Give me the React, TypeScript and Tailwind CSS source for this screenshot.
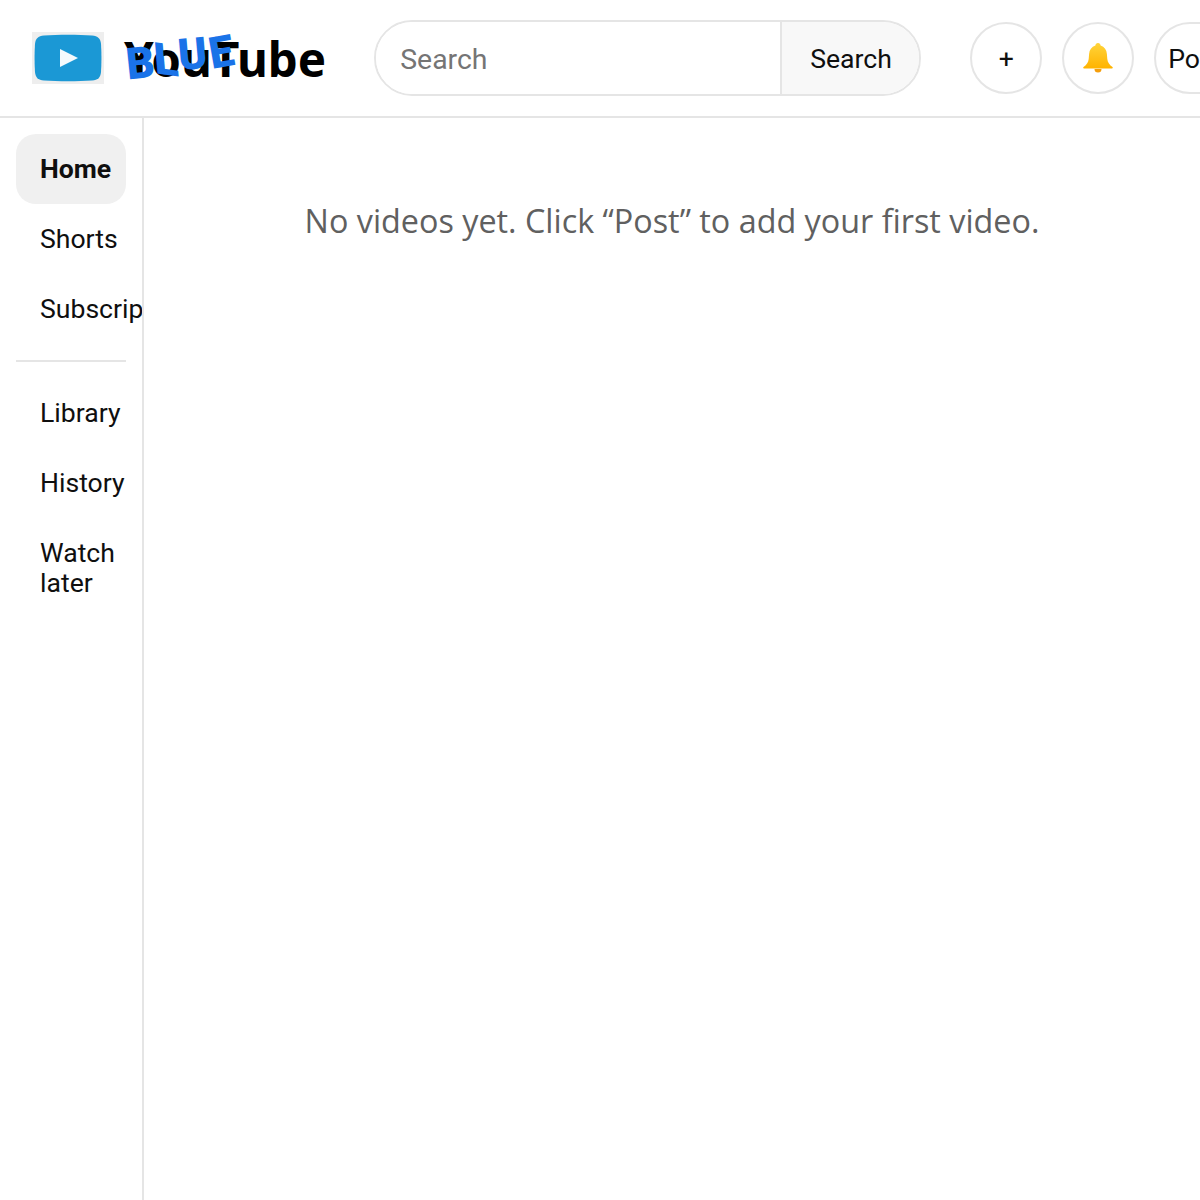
const NAV_TOP = ["Shorts", "Subscriptions"];
const NAV_BOTTOM = ["Library", "History", "Watch later"];

function NavItem({ label, active }: { label: string; active?: boolean }) {
  return (
    <div
      className={
        active
          ? "w-[110px] rounded-[20px] bg-[#f0f0f0] px-6 py-5 text-[26.6px] leading-[30px] font-bold text-[#0f0f0f]"
          : "w-[110px] rounded-[20px] px-6 py-5 text-[26.6px] leading-[30px] text-[#0f0f0f]"
      }
    >
      {label}
    </div>
  );
}

function Logo() {
  return (
    <div className="flex items-center">
      <svg width="72" height="52" viewBox="0 0 72 52" className="shrink-0">
        <rect width="72" height="52" fill="#eeeeee" />
        <path
          d="M12 3.5 C26 2.5 46 2.5 60 3.5 C66 4 68.5 6.5 69 12 C69.6 21 69.6 31 69 40 C68.5 45.5 66 48 60 48.5 C46 49.5 26 49.5 12 48.5 C6 48 3.5 45.5 3 40 C2.4 31 2.4 21 3 12 C3.5 6.5 6 4 12 3.5 Z"
          fill="#1b98d5"
        />
        <path d="M28 17 L46 26 L28 35 Z" fill="#f4fafd" />
      </svg>
      <div className="relative ml-5 pt-0.5 font-['Noto_Sans',sans-serif] text-[47.5px] leading-[52px] font-bold text-black">
        YouTube
        <div className="absolute top-0 left-[2px] flex font-['Roboto',sans-serif] text-[44px] leading-[52px] font-black text-[#1a73e8]">
          <span className="translate-y-[6px] rotate-[-6deg]">B</span>
          <span className="translate-y-[3px] skew-x-[5deg] skew-y-[8deg]">L</span>
          <span className="-translate-y-[3px] rotate-[-5deg]">U</span>
          <span className="ml-px -translate-y-[5px] rotate-[-10deg]">E</span>
        </div>
      </div>
    </div>
  );
}

function Bell() {
  return (
    <svg width="30" height="30" viewBox="0 0 30 30">
      <defs>
        <linearGradient id="bell" x1="0" y1="0" x2="0" y2="1">
          <stop offset="0" stopColor="#ffd43b" />
          <stop offset="1" stopColor="#ffb300" />
        </linearGradient>
      </defs>
      <path
        d="M15 0 C16.5 0 17.5 1 17.6 2.6 C21.5 3.8 23.6 7 23.9 11 L24.3 16 C24.6 19.5 26.6 22 29.5 24 C30 24.6 29.8 25.4 29 25.4 L1 25.4 C0.2 25.4 0 24.6 0.5 24 C3.4 22 5.4 19.5 5.7 16 L6.1 11 C6.4 7 8.5 3.8 12.4 2.6 C12.5 1 13.5 0 15 0 Z"
        fill="url(#bell)"
      />
      <path d="M11.5 26 h7 a3.5 3.5 0 0 1 -7 0 Z" fill="#f59e0b" />
    </svg>
  );
}

export default function App() {
  return (
    <div className="flex h-[1200px] w-[1200px] flex-col overflow-hidden bg-white font-['Roboto',sans-serif]">
      <header className="flex h-[118px] shrink-0 items-center border-b-2 border-[#e5e5e5] pl-8">
        <Logo />
        <div className="ml-[48px] flex h-[76px] w-[547px] shrink-0 overflow-hidden rounded-[38px] border-2 border-[#e5e5e5]">
          <input
            placeholder="Search"
            className="min-w-0 flex-1 bg-white px-6 pt-1 font-['Roboto',sans-serif] text-[28.4px] outline-none placeholder:text-[#757575]"
          />
          <div className="flex w-[139px] items-center border-l-2 border-[#e5e5e5] bg-[#f8f8f8] pt-px pl-7 text-[26.6px] text-[#0f0f0f]">
            Search
          </div>
        </div>
        <div className="ml-[49px] flex shrink-0 gap-5">
          <div className="flex h-[72px] w-[72px] items-center justify-center rounded-full border-2 border-[#e5e5e5] pt-0.5 text-[26.6px] text-[#0f0f0f]">
            +
          </div>
          <div className="flex h-[72px] w-[72px] items-center justify-center rounded-full border-2 border-[#e5e5e5]">
            <Bell />
          </div>
          <div className="flex h-[72px] w-[90px] items-center rounded-full border-2 border-[#e5e5e5] pt-0.5 pl-3 text-[26.6px] text-[#0f0f0f]">
            Post
          </div>
        </div>
      </header>
      <div className="flex min-h-0 flex-1">
        <nav className="w-[144px] shrink-0 overflow-hidden border-r-2 border-[#e5e5e5] p-4">
          <NavItem label="Home" active />
          {NAV_TOP.map((n) => (
            <div key={n} className="whitespace-nowrap">
              <NavItem label={n} />
            </div>
          ))}
          <div className="my-4 h-0.5 w-[110px] bg-[#e5e5e5]" />
          {NAV_BOTTOM.map((n) => (
            <NavItem key={n} label={n} />
          ))}
        </nav>
        <main className="flex-1 pt-20 text-center font-['Open_Sans',sans-serif] text-[32.35px] leading-[44px] text-[#606060]">
          No videos yet. Click “Post” to add your first video.
        </main>
      </div>
    </div>
  );
}
